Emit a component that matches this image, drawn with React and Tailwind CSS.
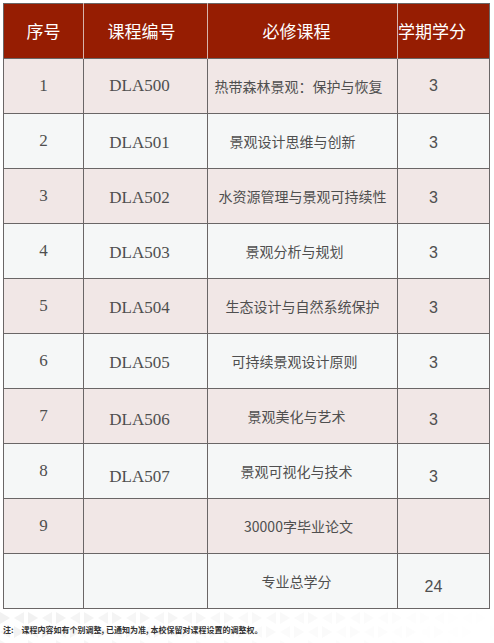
const rows = [
  { no: "1", code: "DLA500", name: "热带森林景观：保护与恢复", credit: "3", nameCls: "pr-2", creditCls: "pt-0" },
  { no: "2", code: "DLA501", name: "景观设计思维与创新", credit: "3", nameCls: "pr-5", creditCls: "pt-1" },
  { no: "3", code: "DLA502", name: "水资源管理与景观可持续性", credit: "3", nameCls: "pr-0", creditCls: "pt-1" },
  { no: "4", code: "DLA503", name: "景观分析与规划", credit: "3", nameCls: "pr-4", creditCls: "pt-1" },
  { no: "5", code: "DLA504", name: "生态设计与自然系统保护", credit: "3", nameCls: "pr-0", creditCls: "pt-1" },
  { no: "6", code: "DLA505", name: "可持续景观设计原则", credit: "3", nameCls: "pr-4", creditCls: "pt-1" },
  { no: "7", code: "DLA506", name: "景观美化与艺术", credit: "3", nameCls: "pr-3", creditCls: "pt-2" },
  { no: "8", code: "DLA507", name: "景观可视化与技术", credit: "3", nameCls: "pr-3", creditCls: "pt-3" },
  { no: "9", code: "", name: "30000字毕业论文", credit: "", nameCls: "pr-2", creditCls: "pt-0" },
  { no: "", code: "", name: "专业总学分", credit: "24", nameCls: "pr-3", creditCls: "pt-3" },
];

const cjk = "font-['Noto_Sans_CJK_SC',sans-serif]";
const serif = "font-['Liberation_Serif','Noto_Sans_CJK_SC',serif]";

// faint chevron background under the table
function Pattern() {
  const tris = [];
  for (let i = 0; i < 18; i++) {
    const x = i * 28;
    const op = Math.max(0, 0.8 - i * 0.045);
    tris.push(<polygon key={"a" + i} points={`${x},2 ${x + 10},8 ${x},14`} fill="#ededed" opacity={op} />);
    tris.push(<polygon key={"b" + i} points={`${x + 24},2 ${x + 14},8 ${x + 24},14`} fill="#ededed" opacity={op * 0.8} />);
    tris.push(<polygon key={"c" + i} points={`${x + 14},16 ${x + 24},22 ${x + 14},28`} fill="#eeeeee" opacity={op * 0.9} />);
    tris.push(<polygon key={"d" + i} points={`${x + 10},16 ${x},22 ${x + 10},28`} fill="#eeeeee" opacity={op * 0.7} />);
    tris.push(<polygon key={"e" + i} points={`${x},30 ${x + 10},36 ${x},42`} fill="#efefef" opacity={op * 0.8} />);
  }
  return (
    <svg className="absolute left-0 top-0" width="494" height="40" viewBox="0 0 494 40">
      {tris}
    </svg>
  );
}

export default function App() {
  return (
    <div className="w-[494px] h-[643px] bg-white overflow-hidden">
      <div className="pt-[3px] pl-[3px]">
        <table className="w-[486px] table-fixed border-collapse border border-[#6a6666]">
          <colgroup>
            <col className="w-[80px]" />
            <col className="w-[124px]" />
            <col className="w-[190px]" />
            <col className="w-[92px]" />
          </colgroup>
          <thead>
            <tr className="h-[55px] bg-[#961d02] text-white text-[17px] font-['Noto_Sans_CJK_SC',sans-serif]">
              <th className="font-normal border-r border-[#d7b3ab] text-center">序号</th>
              <th className="font-normal border-r border-[#d7b3ab] text-center pr-2">课程编号</th>
              <th className="font-normal border-r border-[#d7b3ab] text-center pr-3">必修课程</th>
              <th className="font-normal text-left whitespace-nowrap pl-0">学期学分</th>
            </tr>
          </thead>
          <tbody>
            {rows.map((r, i) => (
              <tr
                key={i}
                className={`h-[55px] text-[#4f4f4f] ${i % 2 === 0 ? "bg-[#f1e7e6]" : "bg-[#f5f7f7]"}`}
              >
                <td className={`border border-[#6a6666] text-center text-[17px] ${serif}`}>{r.no}</td>
                <td className={`border border-[#6a6666] text-center text-[17px] pr-3 ${serif} ${r.creditCls}`}>{r.code}</td>
                <td className={`border border-[#6a6666] text-center text-[14px] whitespace-nowrap ${cjk} ${r.nameCls}`}>{r.name}</td>
                <td className={`border border-[#6a6666] text-center text-[16px] pr-5 font-['Liberation_Sans',sans-serif] ${r.creditCls}`}>{r.credit}</td>
              </tr>
            ))}
          </tbody>
        </table>
      </div>
      <div className="relative h-[40px] mt-[1px]">
        <Pattern />
        <p className={`relative pt-[16px] pl-[3px] text-[8px] leading-none text-[#333] font-semibold ${cjk}`}>
          <span className="mr-[8px]">注:</span>课程内容如有个别调整, 已通知为准, 本校保留对课程设置的调整权。
        </p>
      </div>
    </div>
  );
}
